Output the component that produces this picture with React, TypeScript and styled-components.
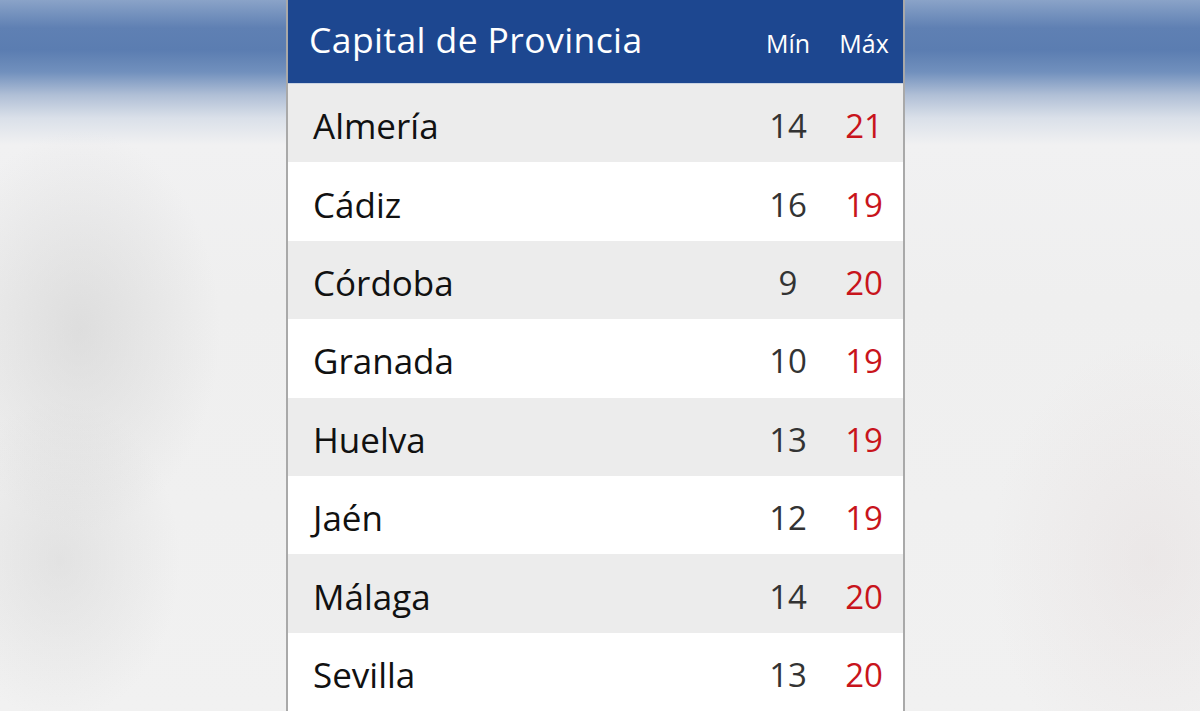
import React from "react";
import styled, { createGlobalStyle } from "styled-components";

const GlobalStyle = createGlobalStyle`
  html, body {
    margin: 0;
    padding: 0;
    height: 100%;
    overflow: hidden;
  }
  body {
    font-family: "Open Sans", "Noto Sans", "DejaVu Sans", sans-serif;
  }
`;

type Row = { city: string; min: number; max: number };

const rows: Row[] = [
  { city: "Almería", min: 14, max: 21 },
  { city: "Cádiz", min: 16, max: 19 },
  { city: "Córdoba", min: 9, max: 20 },
  { city: "Granada", min: 10, max: 19 },
  { city: "Huelva", min: 13, max: 19 },
  { city: "Jaén", min: 12, max: 19 },
  { city: "Málaga", min: 14, max: 20 },
  { city: "Sevilla", min: 13, max: 20 },
];

export default function App() {
  return (
    <Page>
      <GlobalStyle />
      <Card>
        <Header>
          <Title>Capital de Provincia</Title>
          <HeadCell>Mín</HeadCell>
          <HeadCell>Máx</HeadCell>
        </Header>
        {rows.map((r, i) => (
          <DataRow key={r.city} $striped={i % 2 === 0}>
            <City>{r.city}</City>
            <Temp>{r.min}</Temp>
            <Temp $hot>{r.max}</Temp>
          </DataRow>
        ))}
      </Card>
    </Page>
  );
}

const Page = styled.div`
  width: 1200px;
  height: 711px;
  overflow: hidden;
  display: flex;
  align-items: flex-start;
  padding-left: 286px;
  box-sizing: border-box;
  background:
    radial-gradient(ellipse 140px 200px at 80px 330px, rgba(200, 200, 200, 0.45), transparent),
    radial-gradient(ellipse 120px 160px at 60px 560px, rgba(205, 205, 205, 0.4), transparent),
    radial-gradient(ellipse 160px 220px at 1150px 560px, rgba(225, 215, 215, 0.35), transparent),
    linear-gradient(
      to bottom,
      #8aa3c8 0px,
      #5f80b3 28px,
      #5b7db1 50px,
      #7190bd 72px,
      #b0bfd6 95px,
      #dae0e9 118px,
      #f1f1f2 145px,
      #efefef 300px,
      #f1f1f1 711px
    );
`;

const Card = styled.div`
  width: 615px;
  border-left: 2px solid #a9a9a9;
  border-right: 2px solid #a9a9a9;
  background: #ffffff;
  display: flex;
  flex-direction: column;
`;

const Grid = styled.div`
  display: grid;
  grid-template-columns: 1fr 60px 60px;
  column-gap: 16px;
  align-items: center;
  padding: 0 9px 0 25px;
  box-sizing: border-box;
`;

const Header = styled(Grid)`
  height: 84px;
  padding-left: 21px;
  background: #1d4790;
  border-bottom: 1px solid #c9d3e2;
`;

const Title = styled.div`
  color: #ffffff;
  font-size: 35.5px;
  letter-spacing: 0.4px;
  padding-bottom: 6px;
`;

const HeadCell = styled.div`
  color: #ffffff;
  font-size: 25px;
  text-align: center;
  padding-top: 3px;
`;

const DataRow = styled(Grid)<{ $striped: boolean }>`
  height: 78.4px;
  background: ${(p) => (p.$striped ? "#ececec" : "#ffffff")};
`;

const City = styled.div`
  color: #111111;
  font-size: 35px;
  padding-top: 5px;
`;

const Temp = styled.div<{ $hot?: boolean }>`
  color: ${(p) => (p.$hot ? "#c8141c" : "#333333")};
  font-size: 33px;
  text-align: center;
  padding-top: 5px;
`;
